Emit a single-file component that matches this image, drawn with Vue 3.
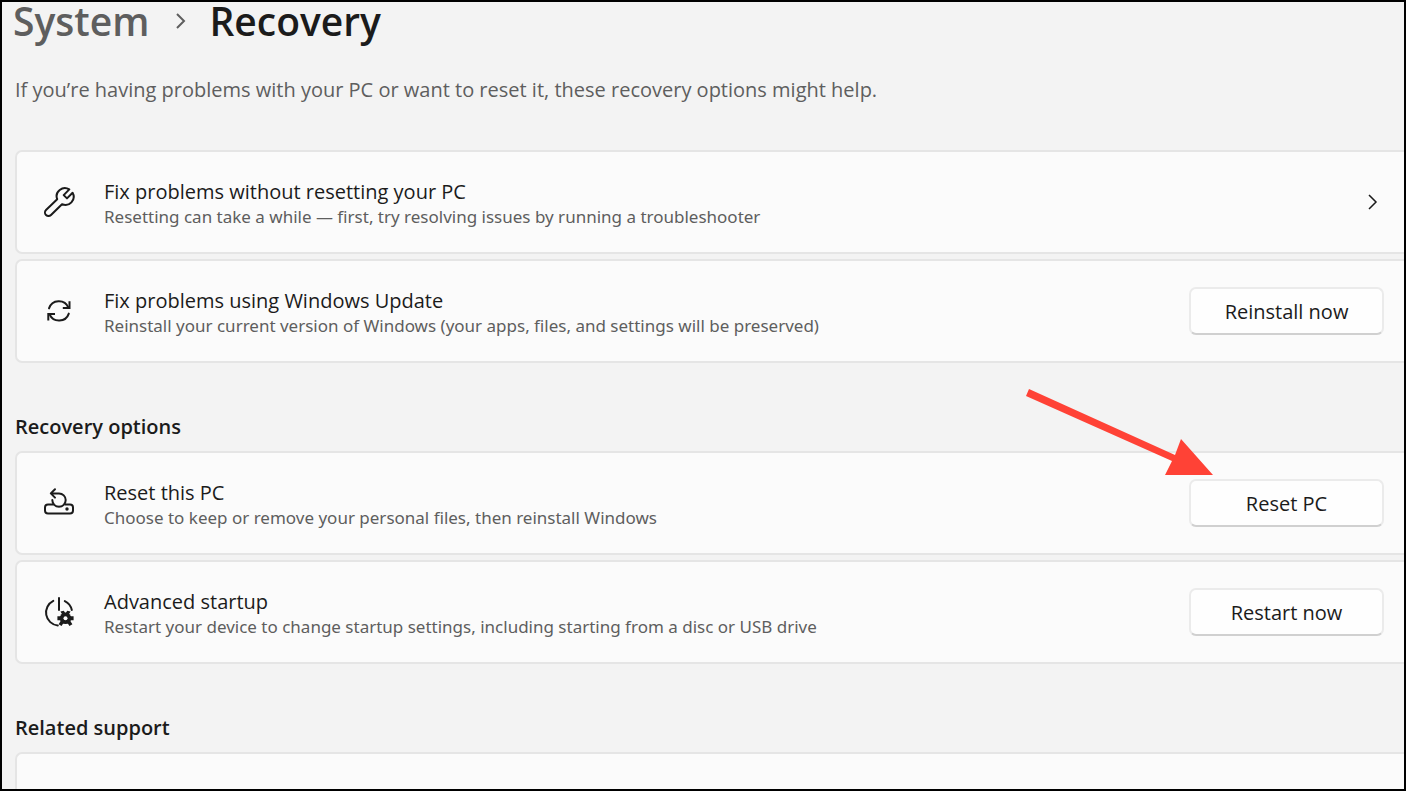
<script setup>
import { ref } from 'vue'

const groups = ref([
  {
    id: 'fix',
    heading: '',
    items: [
      {
        icon: 'wrench',
        title: 'Fix problems without resetting your PC',
        text: 'Resetting can take a while — first, try resolving issues by running a troubleshooter',
        action: '',
      },
      {
        icon: 'sync',
        title: 'Fix problems using Windows Update',
        text: 'Reinstall your current version of Windows (your apps, files, and settings will be preserved)',
        action: 'Reinstall now',
      },
    ],
  },
  {
    id: 'recovery',
    heading: 'Recovery options',
    items: [
      {
        icon: 'reset',
        title: 'Reset this PC',
        text: 'Choose to keep or remove your personal files, then reinstall Windows',
        action: 'Reset PC',
        highlighted: true,
      },
      {
        icon: 'startup',
        title: 'Advanced startup',
        text: 'Restart your device to change startup settings, including starting from a disc or USB drive',
        action: 'Restart now',
      },
    ],
  },
])
</script>

<template>
  <main class="window">
    <nav class="crumbs" aria-label="Breadcrumb">
      <a class="crumb-link" href="#system">System</a>
      <svg class="crumb-arrow" viewBox="0 0 12 18" aria-hidden="true">
        <path d="M2 2l7 7-7 7" />
      </svg>
      <h1 class="crumb-current">Recovery</h1>
    </nav>

    <p class="intro">If you’re having problems with your PC or want to reset it, these recovery options might help.</p>

    <section v-for="group in groups" :key="group.id" class="group">
      <h2 v-if="group.heading" class="heading">{{ group.heading }}</h2>
      <component
        :is="item.action ? 'div' : 'a'"
        v-for="item in group.items"
        :key="item.title"
        class="card"
        :href="item.action ? undefined : '#troubleshoot'"
      >
        <svg class="icon" viewBox="0 0 32 32" aria-hidden="true">
          <path
            v-if="item.icon === 'wrench'"
            d="M26.3 3.4A8.2 8.2 0 0 0 14.2 13.2L3 24a3.5 3.5 0 0 0 5 5L19 18.2A8.2 8.2 0 0 0 29.6 6.8L24 12.4 20.7 9.1z"
          />
          <template v-else-if="item.icon === 'sync'">
            <path d="M6 13.4a10.3 10.3 0 0 1 19.4-.8M25.8 18.6a10.3 10.3 0 0 1-19.2.8" />
            <path class="square" d="M26.5 6.2v6.7h-6.7M5.3 25.6v-6.7H12" />
          </template>
          <template v-else-if="item.icon === 'reset'">
            <rect x="2" y="17.5" width="28" height="9" rx="3" />
            <path class="mask" d="M10.5 16h11.5v2.8H10.5z" />
            <path d="M12 2.2L7.8 6.4l4.2 4.2M8.2 6.4H16a6.7 6.7 0 1 1-6.7 6.7" />
            <circle class="solid" cx="24" cy="22" r="1.7" />
          </template>
          <template v-else>
            <path d="M16 2v12M10.3 4.9A13 13 0 0 0 14.8 29.5M21.8 5.1a13 13 0 0 1 7 8.9" />
            <g class="solid">
              <circle cx="22.5" cy="22.3" r="5.8" />
              <path d="M17.4 15.6l3.4-.8 8.6 13.4-3 1.8zM27.6 15.6l-3.4-.8-8.6 13.4 3 1.8zM14.4 20.3h16.2v4H14.4z" />
            </g>
            <circle class="hole" cx="22.5" cy="22.3" r="2" />
          </template>
        </svg>
        <div class="copy">
          <h3 class="title">{{ item.title }}</h3>
          <p class="text">{{ item.text }}</p>
        </div>
        <div v-if="item.action" class="action">
          <button class="button" type="button">{{ item.action }}</button>
          <svg v-if="item.highlighted" class="pointer" viewBox="0 0 188 88" aria-hidden="true">
            <path d="M4 0L150 66 156 50 188 86H140L147 72 1 7z" />
          </svg>
        </div>
        <svg v-else class="chevron" viewBox="0 0 12 18" aria-hidden="true">
          <path d="M2 2l7 7-7 7" />
        </svg>
      </component>
    </section>

    <section class="group">
      <h2 class="heading">Related support</h2>
      <div class="card"></div>
    </section>
  </main>
</template>

<style>
body {
  margin: 0;
}
</style>

<style scoped>
.window {
  box-sizing: border-box;
  height: 100vh;
  overflow: hidden;
  padding-left: 13px;
  border: 2px solid #000;
  background: #f3f3f3;
  color: #1b1b1b;
  font-family: "Open Sans", "Noto Sans", sans-serif;
}

h1,
h2,
h3,
p {
  margin: 0;
  font-weight: 400;
}

.crumbs {
  display: flex;
  align-items: center;
  height: 38px;
  margin-left: -2px;
  font-size: 39px;
  line-height: 38px;
}

.crumb-link {
  color: #5e5e5e;
  font-weight: 600;
  text-decoration: none;
}

.crumb-arrow {
  width: 12px;
  height: 18px;
  margin: 0 22px 0 26px;
  fill: none;
  stroke: #5e5e5e;
  stroke-width: 2;
}

.crumb-current {
  font-size: 39px;
  font-weight: 600;
}

.intro {
  margin: 36px 0 46px;
  color: #5e5e5e;
  font-size: 20px;
  line-height: 28px;
}

.group {
  display: flex;
  flex-direction: column;
  gap: 5px;
  margin-bottom: 50px;
}

.heading {
  margin-bottom: 5px;
  font-size: 20px;
  font-weight: 600;
  line-height: 28px;
}

.card {
  display: flex;
  align-items: center;
  box-sizing: border-box;
  min-height: 104px;
  padding: 0 20px 0 26px;
  border: 2px solid #e5e5e5;
  border-right: 0;
  border-radius: 7px 0 0 7px;
  background: #fbfbfb;
  color: inherit;
  text-decoration: none;
}

.icon {
  flex: none;
  width: 32px;
  height: 32px;
  margin-right: 29px;
  fill: none;
  stroke: #1b1b1b;
  stroke-width: 2;
  stroke-linejoin: round;
  stroke-linecap: round;
}

.icon .square {
  stroke-linejoin: miter;
  stroke-linecap: butt;
}

.icon .mask,
.icon .hole {
  fill: #fbfbfb;
  stroke: none;
}

.icon .solid {
  fill: #1b1b1b;
  stroke: none;
}

.copy {
  flex: 1;
  padding-top: 4px;
}

.title {
  font-size: 20px;
  line-height: 26px;
}

.text {
  color: #5e5e5e;
  font-family: "Noto Sans", "Open Sans", sans-serif;
  font-size: 17px;
  line-height: 24px;
}

.chevron {
  width: 12px;
  height: 18px;
  margin-right: 5px;
  fill: none;
  stroke: #1b1b1b;
  stroke-width: 1.5;
}

.action {
  position: relative;
}

.button {
  width: 195px;
  height: 48px;
  padding: 0;
  border: 2px solid #ebebeb;
  border-bottom-color: #d0d0d0;
  border-radius: 7px;
  background: #fefefe;
  color: #1b1b1b;
  font: inherit;
  font-size: 20px;
}

.pointer {
  position: absolute;
  right: 171px;
  bottom: 50px;
  width: 188px;
  height: 88px;
  fill: #ff4236;
  pointer-events: none;
}
</style>
